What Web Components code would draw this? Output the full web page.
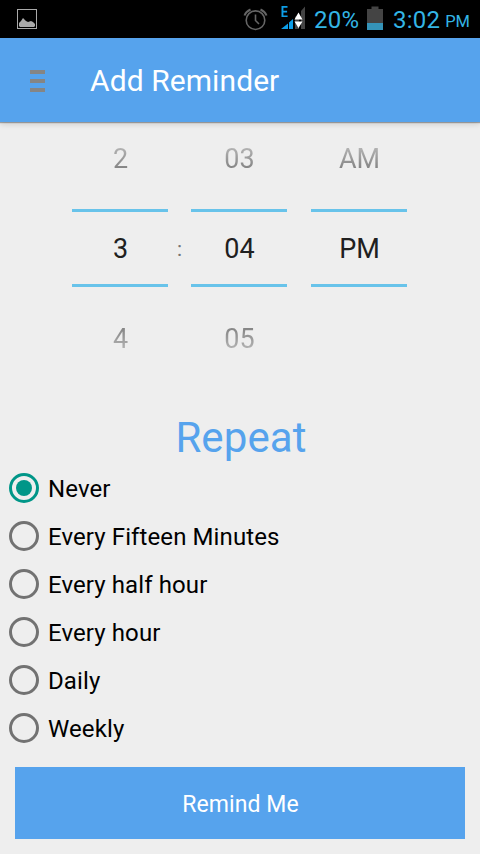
<!DOCTYPE html>
<html lang="en">
<head>
<meta charset="utf-8">
<title>Add Reminder</title>
<style>
html,body{margin:0;height:100%}
body{background:#eee;font-family:Roboto,"Noto Sans",sans-serif;overflow:hidden}
</style>
</head>
<body>
<reminder-screen></reminder-screen>
<script>
function define(name, html) {
  const t = document.createElement('template');
  t.innerHTML = html;
  customElements.define(name, class extends HTMLElement {
    constructor() {
      super();
      this.attachShadow({mode: 'open'}).append(t.content.cloneNode(true));
    }
  });
}

define('status-bar', `<style>
:host{display:flex;height:38px;background:#000;color:#33b5e5;align-items:flex-start;white-space:nowrap;box-sizing:border-box;padding-left:17px}
svg{display:block;flex:none}
.shot{margin-top:9px}
.alarm{margin:7px 0 0 206px}
.signal{margin:5px 0 0 12px}
.pct,.time{font-size:24px;line-height:38px;margin-top:1px;flex:none}
.pct{width:53px;margin-left:8px;letter-spacing:.2px}
.battery{margin-top:6px}
.time{margin-left:10px;letter-spacing:.25px}
.pm{font-size:16.5px;line-height:38px;margin:3px 0 0 5px;letter-spacing:-.2px}
</style>
<svg class="shot" width="20" height="20"><rect x=".5" y=".5" width="19" height="19" fill="none" stroke="#aaa"/><path d="M2 17v-3l2-2 2-3 3 3 2 1 3-1 2 1 2 2v2l-1 1H3z" fill="#aaa"/></svg>
<svg class="alarm" width="26" height="25" fill="none" stroke="#656565"><circle cx="12.5" cy="13.2" r="9.3" stroke-width="1.6"/><path d="M12.5 7.5v6l3.5 3.500" stroke-width="1.6"/><path d="M1.500 8.500Q3 4.500 7.500 2.500M17.500 2.500Q22 4.500 23.500 8.500" stroke-width="2"/></svg>
<svg class="signal" width="25" height="25"><path d="M.5 1h6v1.700H2.400v3h3.700v1.700H2.400v3h4.200V12H.5z" fill="#0d9de6"/><path d="M0 24l7-5.500V24zM8 17.500l4-3.500V24H8z" fill="#0d9de6"/><path d="M14 12l4-3.500V24h-4zM20 6l4-4.500V24h-4z" fill="#444"/><path d="M13.500 14.500L17.500 7.500l4 7zM13.500 16.500h8l-4 6.500z" fill="#fff"/></svg>
<span class="pct">20%</span>
<svg class="battery" width="16" height="24"><path d="M0 3h4.500V.5h7V3H16v14H0z" fill="#444"/><path d="M0 17h16v7H0z" fill="#3593b8"/></svg>
<span class="time">3:02</span><span class="pm">PM</span>`);

define('app-bar', `<style>
:host{display:flex;height:84px;background:#56a3ed;color:#fff;align-items:center;padding-left:30px;box-sizing:border-box;box-shadow:0 1px 1px rgba(0,0,0,.3),0 2px 6px rgba(0,0,0,.15);z-index:1}
.menu{display:grid;gap:5px;width:15px;margin-top:2px}
i{height:4px;background:#858585}
.title{font-size:30px;line-height:40px;margin:1px 0 0 45px;white-space:nowrap;letter-spacing:.08px}
</style>
<div class="menu"><i></i><i></i><i></i></div>
<span class="title"><slot></slot></span>`);

define('number-wheel', `<style>
:host{display:grid;width:96px;grid-template-rows:87px 78px 90px;text-align:center;font-size:27px}
div{display:flex;justify-content:center;box-sizing:border-box;line-height:32px;padding-left:1px}
.fade{background-clip:text;-webkit-background-clip:text;color:transparent}
.before{padding-top:21px;background-image:linear-gradient(#c0c0c0 20px,#7c7c7c 50px,#7c7c7c)}
.now{border-top:3px solid #68c3ea;border-bottom:3px solid #68c3ea;padding-top:21px;color:#202020}
.after{padding-top:36px;background-image:linear-gradient(#7c7c7c 37px,#bcbcbc 66px)}
</style>
<div class="fade before"><slot name="before"></slot></div>
<div class="now"><slot></slot></div>
<div class="fade after"><slot name="after"></slot></div>`);

define('time-picker', `<style>
:host{display:flex;height:288px;padding-left:72px;box-sizing:border-box}
.colon{width:23px;text-align:center;font-size:21px;line-height:24px;color:#747474;padding-top:115px}
.half{margin-left:24px}
</style>
<number-wheel><span slot="before">2</span>3<span slot="after">4</span></number-wheel>
<span class="colon">:</span>
<number-wheel><span slot="before">03</span>04<span slot="after">05</span></number-wheel>
<number-wheel class="half"><span slot="before">AM</span>PM</number-wheel>`);

define('radio-option', `<style>
:host{display:flex;height:48px;align-items:center;padding-left:9px;gap:9px;font-size:24px;color:#000;letter-spacing:.1px}
.ring{width:30px;height:30px;box-sizing:border-box;border:3px solid #727272;border-radius:50%;display:grid;place-items:center;flex:none}
.text{padding-top:2px;line-height:30px;white-space:nowrap}
:host([checked]) .ring{border-color:#009688}
:host([checked]) .ring::after{content:"";width:16px;height:16px;border-radius:50%;background:#009688}
</style>
<span class="ring"></span><span class="text"><slot></slot></span>`);

define('section-title', `<style>
:host{display:block;height:54px;line-height:56px;text-align:center;font-size:42px;color:#56a3ed;padding-left:2px;letter-spacing:.1px}
</style><slot></slot>`);

define('action-button', `<style>
:host{display:flex;height:72px;margin:15px 15px 0;background:#56a3ed;color:#fff;font-size:23px;line-height:30px;align-items:center;justify-content:center;box-sizing:border-box;padding:3px 0 0 1px;letter-spacing:.1px}
</style><span><slot></slot></span>`);

define('reminder-screen', `<style>
:host{display:flex;flex-direction:column;height:854px;width:480px;background:#eee}
</style>
<status-bar></status-bar>
<app-bar>Add Reminder</app-bar>
<time-picker></time-picker>
<section-title>Repeat</section-title>
<radio-option checked>Never</radio-option>
<radio-option>Every Fifteen Minutes</radio-option>
<radio-option>Every half hour</radio-option>
<radio-option>Every hour</radio-option>
<radio-option>Daily</radio-option>
<radio-option>Weekly</radio-option>
<action-button>Remind Me</action-button>`);
</script>
</body>
</html>
